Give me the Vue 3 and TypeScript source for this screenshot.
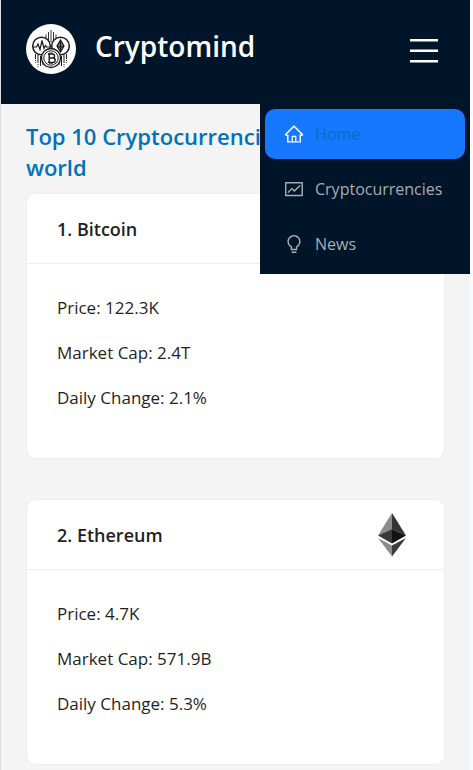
<script setup lang="ts">
import { ref } from 'vue'

interface Coin {
  rank: number
  name: string
  price: string
  cap: string
  change: string
}

interface MenuItem {
  label: string
  icon: string
}

const coins: Coin[] = [
  { rank: 1, name: 'Bitcoin', price: '122.3K', cap: '2.4T', change: '2.1' },
  { rank: 2, name: 'Ethereum', price: '4.7K', cap: '571.9B', change: '5.3' },
]

const menu: MenuItem[] = [
  {
    label: 'Home',
    icon: 'M946.5 505L560.1 118.8l-25.9-25.9a31.5 31.5 0 00-44.4 0L77.5 505a63.9 63.9 0 00-18.8 46c.4 35.2 29.7 63.3 64.9 63.3h42.5V940h691.8V614.3h43.4c17.1 0 33.2-6.7 45.3-18.8a63.6 63.6 0 0018.7-45.3c0-17-6.7-33.1-18.8-45.2zM568 868H456V664h112v204zm217.9-325.7V868H632V640c0-22.1-17.9-40-40-40H432c-22.1 0-40 17.9-40 40v228H238.1V542.3h-96l370-369.7 23.1 23.1L882 542.3h-96.1z',
  },
  {
    label: 'Cryptocurrencies',
    icon: 'M926 164H94c-17.7 0-32 14.3-32 32v640c0 17.7 14.3 32 32 32h832c17.7 0 32-14.3 32-32V196c0-17.7-14.3-32-32-32zm-40 632H134V236h752v560zm-658.9-82.3c3.1 3.1 8.2 3.1 11.3 0l172.5-172.5 114.4 114.5c3.1 3.1 8.2 3.1 11.3 0l297-297.2c3.1-3.1 3.1-8.2 0-11.3l-36.8-36.8a8.03 8.03 0 00-11.3 0L531 565 416.6 450.5a8.03 8.03 0 00-11.3 0l-214.9 215a8.03 8.03 0 000 11.3l36.7 36.9z',
  },
  {
    label: 'News',
    icon: 'M632 888H392c-4.4 0-8 3.6-8 8v32c0 17.7 14.3 32 32 32h192c17.7 0 32-14.3 32-32v-32c0-4.4-3.6-8-8-8zM512 64c-181.1 0-328 146.9-328 328 0 121.4 66 227.4 164 284.1V792c0 17.7 14.3 32 32 32h264c17.7 0 32-14.3 32-32V676.1c98-56.7 164-162.7 164-284.1 0-181.1-146.9-328-328-328zm127.9 549.8L604 634.6V752H420V634.6l-35.9-20.8C305.4 568.3 256 484.5 256 392c0-141.4 114.6-256 256-256s256 114.6 256 256c0 92.5-49.4 176.3-128.1 221.8z',
  },
]

const open = ref(true)
const active = ref('Home')
</script>

<template>
  <div class="app">
    <header class="bar">
      <svg class="logo" viewBox="0 0 50 50" aria-hidden="true">
        <circle cx="25" cy="25" r="25" fill="#fff" />
        <g fill="none" stroke="#1b1b1b">
          <path stroke-width="0.9" d="M25 6v12M22.500 8v8M27.500 8v8M20 10.500v4M30 10.500v4" />
          <path stroke-width="1" d="M9.500 30v5M12 31v8M14.500 32v10M17 37v4M33 37v4M35.500 32v10M38 31v8M40.500 30v5" />
          <path stroke-width="1" stroke-dasharray="1 1.200" d="M9.500 36v3M12 40v3M38 40v3M40.500 36v3" />
          <circle cx="15.500" cy="22" r="8.800" fill="#fff" stroke-width="1.500" />
          <circle cx="34.500" cy="22" r="8.800" fill="#fff" stroke-width="1.500" />
          <path stroke-width="1.200" d="M7 23h3.500l1.500-3 2 5.500 2-9 2 8 1.500-3 1 1.500h2.500" />
          <path stroke-width="1.200" fill="#777" d="M34.500 16l3.500 6-3.500 6-3.500-6z" />
          <path stroke-width="1" d="M31 22l3.500 1.500L38 22M34.500 16v12" />
          <circle cx="25" cy="34" r="9.500" fill="#fff" stroke-width="1.300" />
          <circle cx="25" cy="34" r="7.200" stroke-width="1" />
          <path stroke-width="1.400" d="M22 30h4.500a2 2 0 010 4H23h4a2.200 2.200 0 010 4.400H22M23.200 30v8.400M24 28.500V30M26 28.500V30M24 38.400V40M26 38.400V40" />
        </g>
      </svg>
      <h1 class="brand">Cryptomind</h1>
      <button class="toggle" type="button" aria-label="Menu" :aria-expanded="open" @click="open = !open">
        <svg viewBox="0 0 28 24" width="28" height="24" fill="#fff" aria-hidden="true">
          <rect y="0" width="28" height="2.600" rx="0.300" />
          <rect y="10.500" width="28" height="2.600" rx="0.300" />
          <rect y="21" width="28" height="2.600" rx="0.300" />
        </svg>
      </button>
      <nav v-if="open" class="menu">
        <a
          v-for="item in menu"
          :key="item.label"
          href="#"
          class="item"
          :class="{ active: item.label === active }"
          @click.prevent="active = item.label"
        >
          <svg class="icon" viewBox="64 64 896 896" fill="currentColor" aria-hidden="true">
            <path :d="item.icon" />
          </svg>
          <span class="label">{{ item.label }}</span>
        </a>
      </nav>
    </header>

    <main class="content">
      <h2 class="heading">Top 10 Cryptocurrencies in the world</h2>
      <div class="cards">
        <article v-for="coin in coins" :key="coin.rank" class="card">
          <div class="card-head">
            <h3 class="title">{{ coin.rank }}. {{ coin.name }}</h3>
            <svg v-if="coin.name === 'Ethereum'" class="coin" viewBox="0 0 28 44" aria-hidden="true">
              <path fill="#8c8c8c" d="M14 0L0 22.500 14 16z" />
              <path fill="#343434" d="M14 0v16l14 6.500z" />
              <path fill="#393939" d="M14 16L0 22.500 14 30.500z" />
              <path fill="#141414" d="M14 16v14.500l14-8z" />
              <path fill="#8c8c8c" d="M0 25l14 18.500V32.500z" />
              <path fill="#3c3c3b" d="M28 25L14 32.500v11z" />
            </svg>
          </div>
          <div class="card-body">
            <p>Price: {{ coin.price }}</p>
            <p>Market Cap: {{ coin.cap }}</p>
            <p>Daily Change: {{ coin.change }}%</p>
          </div>
        </article>
      </div>
    </main>
  </div>
</template>

<style>
body {
  background: #fafbff;
}
</style>

<style scoped>
.app {
  box-sizing: border-box;
  min-height: 100vh;
  margin-right: 3px;
  border-left: 1px solid #dcdce2;
  background: #f4f4f4;
  font-family: "Segoe UI", "Open Sans", "Noto Sans", sans-serif;
  font-size: 17px;
  color: #1f1f1f;
}

h1,
h2,
h3,
p {
  margin: 0;
}

.bar {
  position: relative;
  display: flex;
  align-items: center;
  box-sizing: border-box;
  height: 104px;
  padding: 0 32px 6px 25px;
  background: #001529;
}

.logo {
  width: 50px;
  height: 50px;
}

.brand {
  flex: 1;
  margin-left: 19px;
  padding-bottom: 6px;
  font-size: 28px;
  line-height: 40px;
  font-weight: 600;
  color: #fff;
}

.toggle {
  display: flex;
  margin-top: 4px;
  padding: 0;
  border: 0;
  background: none;
  cursor: pointer;
}

.menu {
  position: absolute;
  z-index: 1;
  top: 100%;
  right: 0;
  display: flex;
  flex-direction: column;
  gap: 5px;
  box-sizing: border-box;
  width: 210px;
  padding: 5px;
  background: #001529;
}

.item {
  display: flex;
  align-items: center;
  gap: 12px;
  height: 50px;
  padding: 0 20px;
  border-radius: 10px;
  font-size: 16px;
  color: #a6adb4;
  text-decoration: none;
  white-space: nowrap;
}

.icon {
  flex: none;
  width: 18px;
  height: 18px;
}

.active {
  background: #1677ff;
  color: #fff;
}

.active .label {
  color: #0071bd;
}

.content {
  padding: 17px 25px 5px;
}

.heading {
  margin-bottom: 10px;
  padding-right: 40px;
  font-size: 22px;
  line-height: 31px;
  font-weight: 600;
  color: #0071bd;
}

.cards {
  display: grid;
  gap: 40px;
}

.card {
  border: 1px solid #eee;
  border-radius: 10px;
  background: #fff;
}

.card-head {
  display: flex;
  align-items: center;
  justify-content: space-between;
  box-sizing: border-box;
  height: 70px;
  padding: 0 38px 0 30px;
  border-bottom: 1px solid #eee;
}

.title {
  font-size: 18px;
  line-height: 30px;
  font-weight: 600;
}

.coin {
  width: 28px;
  height: 44px;
}

.card-body {
  display: grid;
  gap: 17px;
  padding: 30px 30px 46px;
  line-height: 28px;
}
</style>
